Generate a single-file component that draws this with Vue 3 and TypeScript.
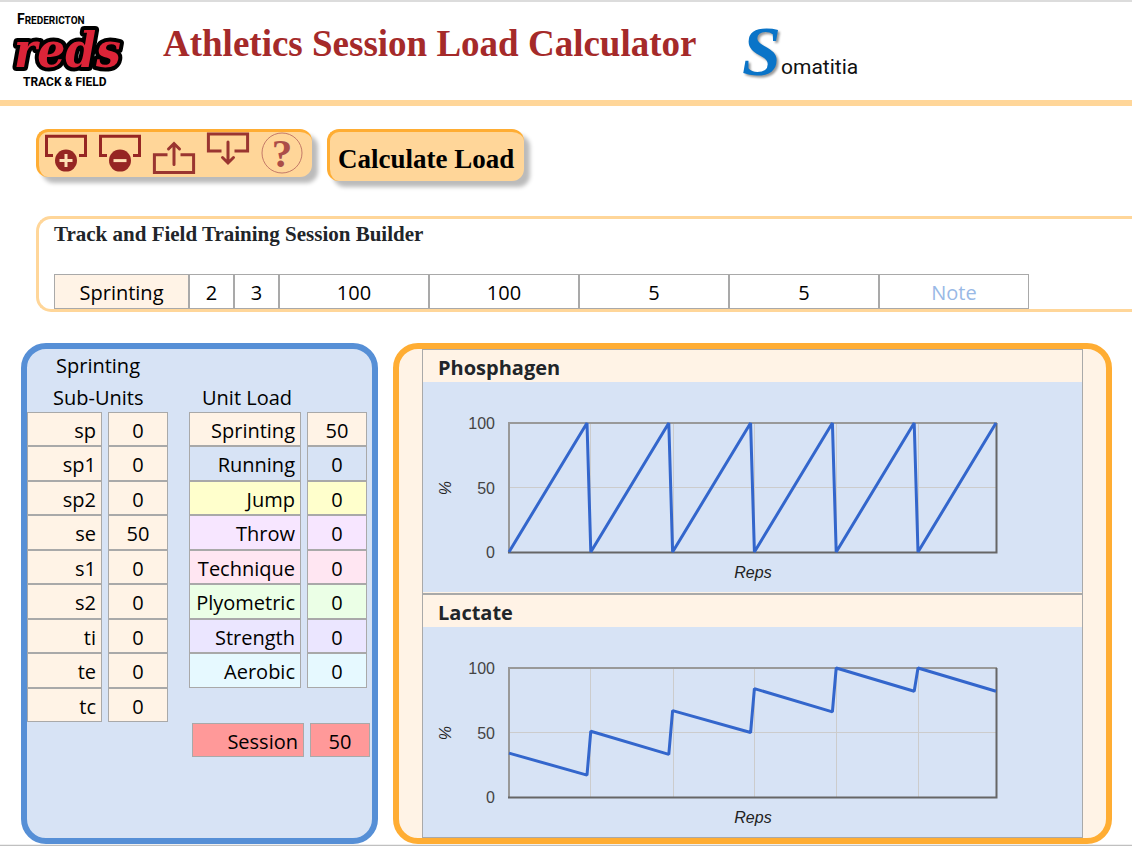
<script setup lang="ts">
import { ref } from 'vue'

interface LoadRow {
  label: string
  value: number
  tone: string
}

interface Chart {
  title: string
  values: number[]
}

const sessionFields = ref([
  { label: 'Unit type', value: 'Sprinting', size: 'type' },
  { label: 'Sets', value: '2', size: 'narrow' },
  { label: 'Reps', value: '3', size: 'narrow' },
  { label: 'Distance', value: '100', size: 'wide' },
  { label: 'Intensity', value: '100', size: 'wide' },
  { label: 'Rep recovery', value: '5', size: 'wide' },
  { label: 'Set recovery', value: '5', size: 'wide' },
  { label: 'Note', value: '', size: 'wide' },
])

const subUnits: LoadRow[] = [
  { label: 'sp', value: 0, tone: 'cream' },
  { label: 'sp1', value: 0, tone: 'cream' },
  { label: 'sp2', value: 0, tone: 'cream' },
  { label: 'se', value: 50, tone: 'cream' },
  { label: 's1', value: 0, tone: 'cream' },
  { label: 's2', value: 0, tone: 'cream' },
  { label: 'ti', value: 0, tone: 'cream' },
  { label: 'te', value: 0, tone: 'cream' },
  { label: 'tc', value: 0, tone: 'cream' },
]

const unitLoads: LoadRow[] = [
  { label: 'Sprinting', value: 50, tone: 'cream' },
  { label: 'Running', value: 0, tone: 'blue' },
  { label: 'Jump', value: 0, tone: 'yellow' },
  { label: 'Throw', value: 0, tone: 'violet' },
  { label: 'Technique', value: 0, tone: 'pink' },
  { label: 'Plyometric', value: 0, tone: 'green' },
  { label: 'Strength', value: 0, tone: 'lilac' },
  { label: 'Aerobic', value: 0, tone: 'cyan' },
]

const charts: Chart[] = [
  { title: 'Phosphagen', values: [0, 100, 0, 100, 0, 100, 0, 100, 0, 100, 0, 100] },
  { title: 'Lactate', values: [34, 17, 51, 33, 67, 50, 84, 66, 100, 82, 100, 82] },
]

const plot = { left: 86, right: 573, top: 41, bottom: 170 }
const ticks = [100, 50, 0]
const repLines = [167, 250, 331, 413, 495]

function yOf(percent: number): number {
  return plot.bottom - (percent * (plot.bottom - plot.top)) / 100
}

// Every rep has a start and an end sample, with a short recovery before the next one.
function linePoints(values: number[]): string {
  return values
    .map((v, i) => {
      const x = plot.left + Math.floor(i / 2) * 81.8 + (i % 2) * 78
      return `${x.toFixed(1)},${yOf(v).toFixed(1)}`
    })
    .join(' ')
}
</script>

<template>
  <div class="page">
    <header class="top">
      <svg class="reds" width="126" height="90" viewBox="0 0 126 90" role="img" aria-label="Fredericton Reds Track and Field">
        <text class="reds-small" x="17" y="22"><tspan class="reds-initial">F</tspan>REDERICTON</text>
        <text class="reds-name" x="14" y="65">reds</text>
        <text class="reds-field" x="23" y="84">TRACK &amp; FIELD</text>
      </svg>
      <h1>Athletics Session Load Calculator</h1>
      <svg class="soma" width="130" height="70" viewBox="0 0 130 70" role="img" aria-label="Somatitia">
        <text class="soma-s" x="6" y="53">S</text>
        <text class="soma-rest" x="45" y="52">omatitia</text>
      </svg>
    </header>

    <div class="actions">
      <div class="toolbar" role="toolbar" aria-label="Session tools">
        <button type="button" aria-label="Add unit">
          <svg width="54" height="45" viewBox="0 0 54 45">
            <path class="frame" d="M14 23.6H7.5V4.2H46.5V23.6H40" />
            <circle class="disc" cx="27" cy="28.6" r="11" />
            <path class="sign" d="M20.5 28.6H33.5M27 22.1V35.1" />
          </svg>
        </button>
        <button type="button" aria-label="Remove unit">
          <svg width="54" height="45" viewBox="0 0 54 45">
            <path class="frame" d="M14 23.6H7.5V4.2H46.5V23.6H40" />
            <circle class="disc" cx="27" cy="28.6" r="11" />
            <path class="sign" d="M20.5 28.6H33.5" />
          </svg>
        </button>
        <button type="button" aria-label="Export session">
          <svg width="54" height="45" viewBox="0 0 54 45">
            <path class="frame soft" d="M20.5 22.8H7.4V40.4H46.6V22.8H33.5" />
            <path class="frame soft round" d="M27 32.5V12M21.5 17L27 11.5L32.5 17" />
          </svg>
        </button>
        <button type="button" aria-label="Import session">
          <svg width="54" height="45" viewBox="0 0 54 45">
            <path class="frame soft" d="M20.5 19H7.4V1.9H46.6V19H33.5" />
            <path class="frame soft round" d="M27 10V30M21.5 25.5L27 31L32.5 25.5" />
          </svg>
        </button>
        <button type="button" aria-label="Help">
          <svg width="54" height="45" viewBox="0 0 54 45">
            <circle class="ring" cx="27" cy="21" r="20" />
            <text class="query" x="27" y="35">?</text>
          </svg>
        </button>
      </div>
      <button type="button" class="calculate">Calculate Load</button>
    </div>

    <section class="builder">
      <h2>Track and Field Training Session Builder</h2>
      <div class="fields">
        <input
          v-for="field in sessionFields"
          :key="field.label"
          v-model="field.value"
          type="text"
          :class="field.size"
          :aria-label="field.label"
          :placeholder="field.label"
        />
      </div>
    </section>

    <main class="results">
      <section class="loads">
        <div class="column sub">
          <h3><span>Sprinting</span><span>Sub-Units</span></h3>
          <table>
            <tbody>
              <tr v-for="row in subUnits" :key="row.label" :class="row.tone">
                <th scope="row">{{ row.label }}</th>
                <td>{{ row.value }}</td>
              </tr>
            </tbody>
          </table>
        </div>
        <div class="column unit">
          <h3><span>Unit Load</span></h3>
          <table>
            <tbody>
              <tr v-for="row in unitLoads" :key="row.label" :class="row.tone">
                <th scope="row">{{ row.label }}</th>
                <td>{{ row.value }}</td>
              </tr>
            </tbody>
          </table>
          <table class="total">
            <tbody>
              <tr class="red">
                <th scope="row">Session</th>
                <td>50</td>
              </tr>
            </tbody>
          </table>
        </div>
      </section>

      <section class="charts">
        <article v-for="chart in charts" :key="chart.title">
          <h3>{{ chart.title }}</h3>
          <svg viewBox="0 0 659 210" role="img" :aria-label="chart.title + ' by reps'">
            <g class="grid">
              <line v-for="x in repLines" :key="x" :x1="x + 0.5" :x2="x + 0.5" :y1="plot.top" :y2="plot.bottom" />
              <line :x1="plot.left" :x2="plot.right" :y1="yOf(50)" :y2="yOf(50)" />
            </g>
            <path class="edge light" d="M86 170V41H574" />
            <path class="edge dark" d="M85 170.5H573.5V41" />
            <polyline class="series" :points="linePoints(chart.values)" />
            <text v-for="t in ticks" :key="t" class="tick" x="72" :y="yOf(t) + 6">{{ t }}</text>
            <text class="axis" x="330" y="196">Reps</text>
            <text class="axis" transform="rotate(-90 28 106)" x="28" y="106">%</text>
          </svg>
        </article>
      </section>
    </main>
    <div class="rule"></div>
  </div>
</template>

<style>
body {
  margin: 0;
  background: #fff;
}
</style>

<style scoped>
.page,
.page * {
  box-sizing: border-box;
}
.page {
  overflow: hidden;
  color: #000;
  font-family: "Open Sans", "Noto Sans", sans-serif;
  font-size: 20px;
}
h1,
h2,
h3 {
  margin: 0;
}
button {
  font: inherit;
  cursor: pointer;
}

.top {
  display: flex;
  align-items: flex-start;
  height: 106px;
  border-top: 2px solid #dcdcdc;
  border-bottom: 6px solid #ffd699;
}
.reds {
  flex: none;
  margin-right: 37px;
}
.reds-small {
  font: bold 10px "Roboto", sans-serif;
}
.reds-initial {
  font-size: 14px;
}
.reds-name {
  fill: #dc2438;
  stroke: #000;
  stroke-width: 8px;
  stroke-linejoin: round;
  paint-order: stroke;
  font: italic bold 49px "DejaVu Serif Condensed", "DejaVu Serif", serif;
}
.reds-field {
  font: bold 12px "Roboto", sans-serif;
}
h1 {
  margin-top: 20px;
  color: #a52a2a;
  font: bold 37px/44px "Liberation Serif", serif;
  white-space: nowrap;
}
.soma {
  flex: none;
  margin: 20px 0 0 40px;
}
.soma-s {
  fill: #0a74c8;
  font: italic bold 70px "Liberation Serif", serif;
  filter: drop-shadow(2px 2px 1px #999);
}
.soma-rest {
  fill: #111;
  font: 21px "Roboto", sans-serif;
}

.actions {
  display: flex;
  align-items: flex-start;
  gap: 15px;
  padding: 23px 36px 35px;
}
.toolbar {
  display: flex;
  height: 48px;
  padding-right: 3px;
  border: 0 solid #ffad33;
  border-width: 3px 0 0 3px;
  border-radius: 12px;
  background: #ffd699;
  box-shadow: 6px 6px 4px #bbb;
}
.toolbar button {
  padding: 0;
  border: 0;
  background: none;
}
.toolbar svg {
  display: block;
}
.frame {
  fill: none;
  stroke: #962623;
  stroke-width: 3px;
}
.soft {
  stroke: #9a3530;
}
.round {
  stroke-linecap: round;
}
.disc {
  fill: #962623;
}
.sign {
  stroke: #ffe0b5;
  stroke-width: 3px;
}
.ring {
  fill: none;
  stroke: #c47a68;
  stroke-width: 1px;
}
.query {
  fill: #ab4d48;
  font: bold 41px "Liberation Serif", serif;
  text-anchor: middle;
}
.calculate {
  height: 52px;
  padding: 5px 10px 0 8px;
  border: 0 solid #ffad33;
  border-width: 3px 0 0 3px;
  border-radius: 12px;
  background: #ffd699;
  box-shadow: 6px 6px 4px #bbb;
  color: #000;
  font: bold 27px "Liberation Serif", serif;
}

.builder {
  height: 96px;
  margin-left: 36px;
  padding-left: 15px;
  border: 3px solid #ffd699;
  border-right: 0;
  border-radius: 15px 0 0 15px;
}
h2 {
  margin-bottom: 25px;
  color: #212529;
  font: bold 21px/30px "Liberation Serif", serif;
}
.fields {
  display: flex;
}
.fields input {
  height: 35px;
  padding: 2px 2px 0;
  border: 1px solid #a9a9a9;
  border-radius: 0;
  background: #fff;
  color: #000;
  font: inherit;
  text-align: center;
}
.fields input::placeholder {
  color: #99b9e6;
  opacity: 1;
}
.fields .type {
  width: 135px;
  background: #fff3e6;
}
.fields .narrow {
  width: 45px;
}
.fields .wide {
  width: 150px;
}

.results {
  display: flex;
  gap: 15px;
  padding: 31px 20px 0 21px;
}
.loads {
  display: flex;
  flex: none;
  gap: 21px;
  width: 357px;
  border: 6px solid #568fd6;
  border-radius: 25px;
  background: #d7e3f5;
}
.loads h3 {
  display: flex;
  flex-direction: column;
  justify-content: flex-end;
  height: 63px;
  font-size: 20px;
  font-weight: 400;
  line-height: 32px;
}
.loads h3 span:last-child {
  height: 30px;
}
.sub h3 {
  padding-left: 26px;
}
.sub h3 span:first-child {
  padding-left: 3px;
}
.unit h3 {
  padding-left: 13px;
}
table {
  border-collapse: separate;
  border-spacing: 0;
}
tr {
  display: flex;
  gap: 6px;
  height: 34px;
}
tr:nth-child(even) {
  height: 35px;
}
th,
td {
  display: block;
  height: 100%;
  padding: 0;
  border: 1px solid #a9a9a9;
  font-weight: 400;
  line-height: 35px;
}
th {
  width: 75px;
  padding-right: 5px;
  text-align: right;
}
td {
  width: 60px;
  text-align: center;
}
.unit th {
  width: 112px;
}
.total {
  margin: 35px 0 0 3px;
}
.cream > * {
  background: #fff3e6;
}
.blue > * {
  background: #d7e3f5;
}
.yellow > * {
  background: #ffffcc;
}
.violet > * {
  background: #f7e6ff;
}
.pink > * {
  background: #ffe6f2;
}
.green > * {
  background: #ebffe6;
}
.lilac > * {
  background: #ebe6ff;
}
.cyan > * {
  background: #e6f9ff;
}
.red > * {
  background: #ff9999;
}

.charts {
  flex: 1;
  min-width: 0;
  padding: 0 23px;
  border: 6px solid #ffad33;
  border-radius: 25px;
  background: #fff3e6;
}
article {
  padding-bottom: 1px;
  border: 1px solid #a9a9a9;
}
article:last-child {
  padding-bottom: 0;
}
article h3 {
  height: 32px;
  padding-left: 15px;
  color: #212529;
  font-size: 20px;
  font-weight: 700;
  line-height: 35px;
}
article svg {
  display: block;
  width: 100%;
  background: #d7e3f5;
}
.grid line {
  stroke: #ccc;
  stroke-width: 1px;
}
.edge {
  fill: none;
  stroke-width: 2px;
}
.light {
  stroke: #999;
}
.dark {
  stroke: #666;
}
.series {
  fill: none;
  stroke: #3366cc;
  stroke-width: 3px;
  stroke-linejoin: bevel;
}
.tick {
  fill: #444;
  font: 16px "Liberation Sans", sans-serif;
  text-anchor: end;
}
.axis {
  fill: #222;
  font: italic 16px "Liberation Sans", sans-serif;
  text-anchor: middle;
}
.rule {
  height: 2px;
  border-bottom: 1px solid #c0c0c0;
  background: #efefef;
}
</style>
